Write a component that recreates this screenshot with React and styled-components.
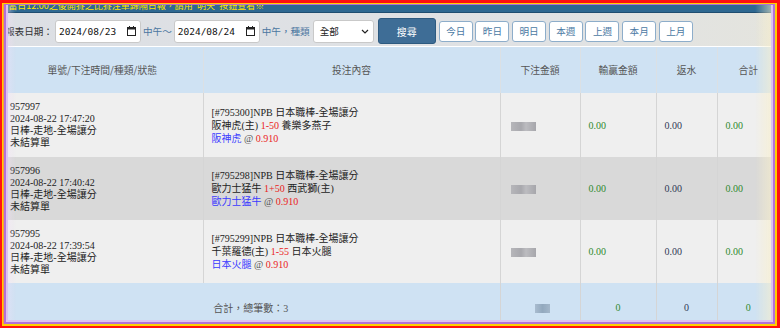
import React from 'react';
import styled, { createGlobalStyle } from 'styled-components';

const GlobalStyle = createGlobalStyle`
  body {
    margin: 0;
    background: #fff;
    font-family: "Noto Sans CJK TC", sans-serif;
  }
`;

const Page = styled.div`
  width: 780px;
  height: 328px;
  overflow: hidden;
`;

const Banner = styled.div`
  height: 12px;
  padding-left: 4px;
  background: #2e6891;
  border-bottom: 1px solid #1f4d70;
  color: #ffe400;
  font-size: 9px;
  line-height: 12px;
  white-space: nowrap;
  overflow: hidden;
`;

const Toolbar = styled.div`
  display: flex;
  align-items: center;
  height: 33px;
  box-sizing: border-box;
  padding: 3px 0 0 3px;
  background: linear-gradient(to right, #dcdfe4, #e0e2e4 70%, #e4e4de);
  font-size: 9.6px;
`;

const Label = styled.span`
  color: ${(p) => (p.$blue ? '#4a76a0' : '#333')};
  margin: 0 2px;
  white-space: nowrap;
`;

const DateBox = styled.div`
  display: flex;
  align-items: center;
  justify-content: space-between;
  width: 86px;
  height: 23px;
  box-sizing: border-box;
  padding: 0 4px 0 3px;
  background: #fff;
  border: 1px solid #c9c9c9;
  border-radius: 3px;
  font-family: "DejaVu Sans Mono", monospace;
  font-size: 9.5px;
  color: #111;
`;

const SelectBox = styled.div`
  display: flex;
  align-items: center;
  justify-content: space-between;
  width: 61px;
  height: 23px;
  box-sizing: border-box;
  margin-left: 1px;
  padding: 0 4px 0 6px;
  background: #fff;
  border: 1px solid #c9c9c9;
  border-radius: 3px;
  color: #222;
`;

const SearchButton = styled.button`
  width: 58px;
  height: 26px;
  margin: 0 3px 0 4px;
  padding: 0;
  background: #3e6d96;
  border: 1px solid #2d5a80;
  border-radius: 3px;
  color: #fff;
  font-family: inherit;
  font-size: 10px;
`;

const QuickButton = styled.button`
  width: 34px;
  height: 21px;
  margin-right: 2.7px;
  padding: 0;
  background: #fff;
  border: 1px solid #8dadca;
  border-radius: 3px;
  color: #4b79a3;
  font-family: inherit;
  font-size: 9.6px;
`;

const Table = styled.table`
  width: 777px;
  margin: 1px 0 0 2px;
  border-collapse: collapse;
  table-layout: fixed;
`;

const Col = styled.col`
  width: ${(p) => p.$w}px;
`;

const Th = styled.th`
  height: 46px;
  padding: 0;
  background: #cfe2f3;
  border-left: 1px solid #dbe0e4;
  color: #555;
  font-size: 9.8px;
  font-weight: normal;
  &:first-child {
    border-left: none;
  }
`;

const Tr = styled.tr`
  background: ${(p) => p.$bg};
`;

const Td = styled.td`
  height: ${(p) => p.$h}px;
  padding: 0 8px;
  border-left: 1px solid #d5d5d5;
  text-align: ${(p) => (p.$center ? 'center' : 'left')};
  font-family: "Liberation Serif", "Noto Sans CJK TC", serif;
  font-size: 10px;
  color: #222;
  &:first-child {
    border-left: none;
  }
`;

const Lines = styled.div`
  line-height: ${(p) => p.$lh}px;
  white-space: nowrap;
`;

const Red = styled.span`
  color: #ea1c1c;
`;

const Blue = styled.span`
  color: #3a3aff;
`;

const Gray = styled.span`
  color: #555;
`;

const Num = styled.span`
  color: ${(p) => (p.$green ? '#2e8a2e' : '#2f3a55')};
`;

const Hidden = styled.span`
  display: inline-block;
  width: ${(p) => p.$w}px;
  height: 9px;
  margin-left: ${(p) => p.$ml || 0}px;
  vertical-align: middle;
  background: ${(p) => p.$c};
  filter: blur(0.7px);
`;

const FrameLayer = styled.div`
  position: ${(p) => (p.$root ? 'fixed' : 'absolute')};
  inset: 0;
  pointer-events: none;
  border-style: solid;
  border-color: ${(p) => p.$c};
  border-width: ${(p) => p.$w};
`;

const Glow = styled.div`
  position: absolute;
  inset: 0;
  background: linear-gradient(to right, rgba(240, 220, 245, 0.35), transparent 8px, transparent calc(100% - 16px), rgba(250, 240, 200, 0.55));
`;

const CalendarIcon = () => (
  <svg width="9" height="10" viewBox="0 0 9 10">
    <rect x="0.5" y="1.5" width="8" height="8" fill="none" stroke="#222" />
    <rect x="0.5" y="1.5" width="8" height="2" fill="#222" />
    <rect x="2" y="0" width="1" height="2" fill="#222" />
    <rect x="6" y="0" width="1" height="2" fill="#222" />
  </svg>
);

const Chevron = () => (
  <svg width="8" height="5" viewBox="0 0 8 5">
    <path d="M1 1l3 3 3-3" fill="none" stroke="#222" strokeWidth="1.2" />
  </svg>
);

const rows = [
  { id: '957997', time: '2024-08-22 17:47:20', game: '795300', home: '阪神虎(主)', line: '1-50', away: '養樂多燕子', pick: '阪神虎' },
  { id: '957996', time: '2024-08-22 17:40:42', game: '795298', home: '歐力士猛牛', line: '1+50', away: '西武獅(主)', pick: '歐力士猛牛' },
  { id: '957995', time: '2024-08-22 17:39:54', game: '795299', home: '千葉羅德(主)', line: '1-55', away: '日本火腿', pick: '日本火腿' },
];

const quick = ['今日', '昨日', '明日', '本週', '上週', '本月', '上月'];

const App = () => {
  return (
    <Page>
      <GlobalStyle />
      <Banner>?當日12:00之後開賽之比賽注單歸隔日報，請用"明天"按鈕查看※</Banner>
      <Toolbar>
        <Label>報表日期：</Label>
        <DateBox>
          2024/08/23
          <CalendarIcon />
        </DateBox>
        <Label $blue>中午～</Label>
        <DateBox>
          2024/08/24
          <CalendarIcon />
        </DateBox>
        <Label $blue>中午，種類</Label>
        <SelectBox>
          全部
          <Chevron />
        </SelectBox>
        <SearchButton>搜尋</SearchButton>
        {quick.map((q) => (
          <QuickButton key={q}>{q}</QuickButton>
        ))}
      </Toolbar>
      <Table>
        <colgroup>
          <Col $w={201} />
          <Col $w={297} />
          <Col $w={80} />
          <Col $w={76} />
          <Col $w={61} />
          <Col $w={62} />
        </colgroup>
        <thead>
          <tr>
            <Th>單號/下注時間/種類/狀態</Th>
            <Th>投注內容</Th>
            <Th>下注金額</Th>
            <Th>輸贏金額</Th>
            <Th>返水</Th>
            <Th>合計</Th>
          </tr>
        </thead>
        <tbody>
          {rows.map((r, i) => (
            <Tr key={r.id} $bg={i === 1 ? '#d9d9d9' : '#efefef'}>
              <Td $h={i === 0 ? 64 : 63}>
                <Lines $lh={12}>
                  <div>{r.id}</div>
                  <div>{r.time}</div>
                  <div>日棒-走地-全場讓分</div>
                  <div>未結算單</div>
                </Lines>
              </Td>
              <Td>
                <Lines $lh={13}>
                  <div>[#{r.game}]NPB 日本職棒-全場讓分</div>
                  <div>
                    {r.home} <Red>{r.line}</Red> {r.away}
                  </div>
                  <div>
                    <Blue>{r.pick}</Blue> <Gray>@</Gray> <Red>0.910</Red>
                  </div>
                </Lines>
              </Td>
              <Td>
                <Hidden $w={25} $ml={2} $c="linear-gradient(to right, #b6b6ba, #a8a8ad 40%, #bcbcc0 60%, #a6a6ab)" />
              </Td>
              <Td><Num $green>0.00</Num></Td>
              <Td><Num>0.00</Num></Td>
              <Td><Num $green>0.00</Num></Td>
            </Tr>
          ))}
          <Tr $bg="#cfe2f3">
            <Td $h={48} colSpan={2} $center>
              <Gray>合計，總筆數：3</Gray>
            </Td>
            <Td $center>
              <Hidden $w={15} $ml={4} $c="linear-gradient(to right, #a9bccf, #93a9be 50%, #a4b7ca)" />
            </Td>
            <Td $center><Num $green>0</Num></Td>
            <Td $center><Num>0</Num></Td>
            <Td $center><Num $green>0</Num></Td>
          </Tr>
        </tbody>
      </Table>
      <FrameLayer $root $c="#ff1010" $w="3px 3px 2px 2px">
        <FrameLayer $c="#ffd000" $w="1px 2px 2px 1px">
          <FrameLayer $c="#ff9a3a" $w="0 0 0 1px">
            <FrameLayer $c="#b46fd8" $w="1px 2px 2px 2px">
              <FrameLayer $c="#dcc3ef" $w="0 2px 2px 2px">
                <Glow />
              </FrameLayer>
            </FrameLayer>
          </FrameLayer>
        </FrameLayer>
      </FrameLayer>
    </Page>
  );
};

export default App;
